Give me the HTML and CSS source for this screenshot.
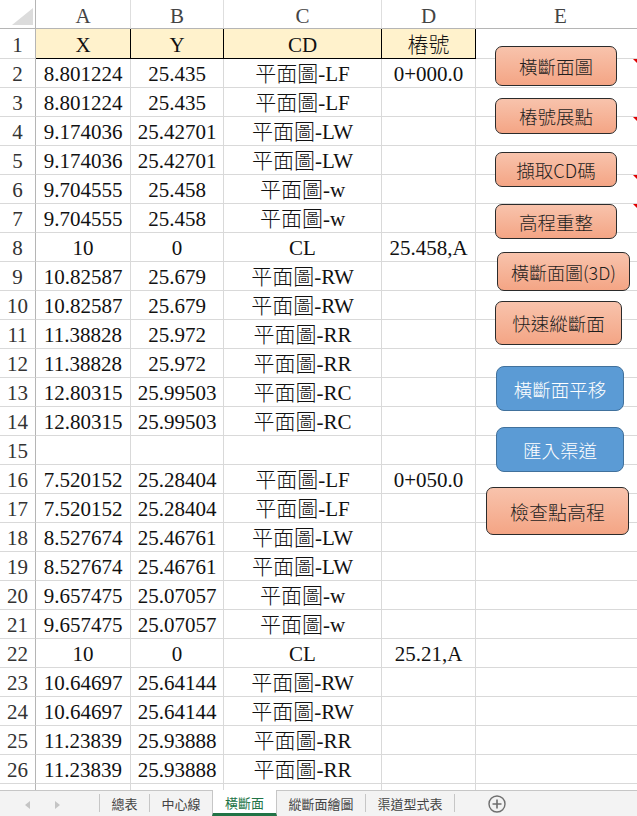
FILE: index.html
```html
<!DOCTYPE html>
<html lang="zh-Hant">
<head>
<meta charset="utf-8">
<title>橫斷面</title>
<link rel="stylesheet" href="styles.css">
</head>
<body>
<div class="app">
  <div class="sheet">
    <div class="row head">
      <div class="cell corner"><span class="tri"></span></div>
      <div class="cell">A</div>
      <div class="cell">B</div>
      <div class="cell">C</div>
      <div class="cell">D</div>
      <div class="cell">E</div>
    </div>
    <div class="row first">
      <div class="cell num">1</div>
      <div class="cell hd">X</div>
      <div class="cell hd">Y</div>
      <div class="cell hd">CD</div>
      <div class="cell hd">樁號</div>
      <div class="cell"></div>
    </div>
    <div class="row"><div class="cell num">2</div><div class="cell">8.801224</div><div class="cell">25.435</div><div class="cell">平面圖-LF</div><div class="cell">0+000.0</div><div class="cell"></div></div>
    <div class="row"><div class="cell num">3</div><div class="cell">8.801224</div><div class="cell">25.435</div><div class="cell">平面圖-LF</div><div class="cell"></div><div class="cell"></div></div>
    <div class="row"><div class="cell num">4</div><div class="cell">9.174036</div><div class="cell">25.42701</div><div class="cell">平面圖-LW</div><div class="cell"></div><div class="cell"></div></div>
    <div class="row"><div class="cell num">5</div><div class="cell">9.174036</div><div class="cell">25.42701</div><div class="cell">平面圖-LW</div><div class="cell"></div><div class="cell"></div></div>
    <div class="row"><div class="cell num">6</div><div class="cell">9.704555</div><div class="cell">25.458</div><div class="cell">平面圖-w</div><div class="cell"></div><div class="cell"></div></div>
    <div class="row"><div class="cell num">7</div><div class="cell">9.704555</div><div class="cell">25.458</div><div class="cell">平面圖-w</div><div class="cell"></div><div class="cell"></div></div>
    <div class="row"><div class="cell num">8</div><div class="cell">10</div><div class="cell">0</div><div class="cell">CL</div><div class="cell">25.458,A</div><div class="cell"></div></div>
    <div class="row"><div class="cell num">9</div><div class="cell">10.82587</div><div class="cell">25.679</div><div class="cell">平面圖-RW</div><div class="cell"></div><div class="cell"></div></div>
    <div class="row"><div class="cell num">10</div><div class="cell">10.82587</div><div class="cell">25.679</div><div class="cell">平面圖-RW</div><div class="cell"></div><div class="cell"></div></div>
    <div class="row"><div class="cell num">11</div><div class="cell">11.38828</div><div class="cell">25.972</div><div class="cell">平面圖-RR</div><div class="cell"></div><div class="cell"></div></div>
    <div class="row"><div class="cell num">12</div><div class="cell">11.38828</div><div class="cell">25.972</div><div class="cell">平面圖-RR</div><div class="cell"></div><div class="cell"></div></div>
    <div class="row"><div class="cell num">13</div><div class="cell">12.80315</div><div class="cell">25.99503</div><div class="cell">平面圖-RC</div><div class="cell"></div><div class="cell"></div></div>
    <div class="row"><div class="cell num">14</div><div class="cell">12.80315</div><div class="cell">25.99503</div><div class="cell">平面圖-RC</div><div class="cell"></div><div class="cell"></div></div>
    <div class="row"><div class="cell num">15</div><div class="cell"></div><div class="cell"></div><div class="cell"></div><div class="cell"></div><div class="cell"></div></div>
    <div class="row"><div class="cell num">16</div><div class="cell">7.520152</div><div class="cell">25.28404</div><div class="cell">平面圖-LF</div><div class="cell">0+050.0</div><div class="cell"></div></div>
    <div class="row"><div class="cell num">17</div><div class="cell">7.520152</div><div class="cell">25.28404</div><div class="cell">平面圖-LF</div><div class="cell"></div><div class="cell"></div></div>
    <div class="row"><div class="cell num">18</div><div class="cell">8.527674</div><div class="cell">25.46761</div><div class="cell">平面圖-LW</div><div class="cell"></div><div class="cell"></div></div>
    <div class="row"><div class="cell num">19</div><div class="cell">8.527674</div><div class="cell">25.46761</div><div class="cell">平面圖-LW</div><div class="cell"></div><div class="cell"></div></div>
    <div class="row"><div class="cell num">20</div><div class="cell">9.657475</div><div class="cell">25.07057</div><div class="cell">平面圖-w</div><div class="cell"></div><div class="cell"></div></div>
    <div class="row"><div class="cell num">21</div><div class="cell">9.657475</div><div class="cell">25.07057</div><div class="cell">平面圖-w</div><div class="cell"></div><div class="cell"></div></div>
    <div class="row"><div class="cell num">22</div><div class="cell">10</div><div class="cell">0</div><div class="cell">CL</div><div class="cell">25.21,A</div><div class="cell"></div></div>
    <div class="row"><div class="cell num">23</div><div class="cell">10.64697</div><div class="cell">25.64144</div><div class="cell">平面圖-RW</div><div class="cell"></div><div class="cell"></div></div>
    <div class="row"><div class="cell num">24</div><div class="cell">10.64697</div><div class="cell">25.64144</div><div class="cell">平面圖-RW</div><div class="cell"></div><div class="cell"></div></div>
    <div class="row"><div class="cell num">25</div><div class="cell">11.23839</div><div class="cell">25.93888</div><div class="cell">平面圖-RR</div><div class="cell"></div><div class="cell"></div></div>
    <div class="row"><div class="cell num">26</div><div class="cell">11.23839</div><div class="cell">25.93888</div><div class="cell">平面圖-RR</div><div class="cell"></div><div class="cell"></div></div>
    <div class="row"><div class="cell num"></div><div class="cell"></div><div class="cell"></div><div class="cell"></div><div class="cell"></div><div class="cell"></div></div>

    <span class="mark m1"></span>
    <span class="mark m2"></span>
    <span class="mark m3"></span>
    <span class="mark m4"></span>

    <div class="btn orange b1">橫斷面圖</div>
    <div class="btn orange b2">樁號展點</div>
    <div class="btn orange b3">擷取CD碼</div>
    <div class="btn orange b4">高程重整</div>
    <div class="btn orange b5">橫斷面圖(3D)</div>
    <div class="btn orange b6">快速縱斷面</div>
    <div class="btn blue b7">橫斷面平移</div>
    <div class="btn blue b8">匯入渠道</div>
    <div class="btn orange b9">檢查點高程</div>
  </div>

  <div class="tabbar">
    <div class="nav">
      <span class="arrow left"></span>
      <span class="arrow right"></span>
    </div>
    <div class="tab">總表</div>
    <div class="tab">中心線</div>
    <div class="tab active">橫斷面</div>
    <div class="tab">縱斷面繪圖</div>
    <div class="tab">渠道型式表</div>
    <div class="add">
      <svg width="20" height="20" viewBox="0 0 20 20">
        <circle cx="10" cy="10" r="8" fill="none" stroke="#6f6f6f" stroke-width="1.4"/>
        <path d="M10 5.5V14.5M5.5 10H14.5" stroke="#6f6f6f" stroke-width="1.6"/>
      </svg>
    </div>
  </div>
</div>
</body>
</html>
```
FILE: styles.css
```css
html, body {
  margin: 0;
  padding: 0;
  background: #ffffff;
  overflow: hidden;
}

.app {
  width: 637px;
  height: 816px;
  display: flex;
  flex-direction: column;
  overflow: hidden;
}

.sheet {
  position: relative;
  height: 790px;
  overflow: hidden;
  font-family: "Liberation Serif", "Noto Sans CJK TC", serif;
  font-size: 21px;
  font-weight: 300;
  color: #111;
}

.row {
  display: grid;
  grid-template-columns: 36px 95px 93px 158px 94px 170px;
  height: 29px;
}

.cell {
  box-sizing: border-box;
  border-right: 1px solid #d9d9d9;
  border-bottom: 1px solid #d9d9d9;
  display: flex;
  align-items: flex-end;
  justify-content: center;
  padding-bottom: 1px;
  line-height: 24px;
  white-space: nowrap;
  overflow: hidden;
}

.cell.num {
  border-right: 1px solid #b5b5b5;
  color: #333;
}

.row.head .cell {
  color: #444;
  border-bottom: 1px solid #b5b5b5;
  border-right: 1px solid #dedede;
  font-size: 21px;
  padding-bottom: 0;
}

.row.head .cell.corner {
  border-right: 1px solid #b5b5b5;
  position: relative;
}

.tri {
  position: absolute;
  right: 2px;
  bottom: 3px;
  width: 0;
  height: 0;
  border-left: 21px solid transparent;
  border-bottom: 17px solid #dcdcdc;
}

.row.first {
  height: 30px;
}

.cell.hd {
  background: #fff2cc;
  border-right: 1px solid #000;
  border-bottom: 1px solid #000;
}

.mark {
  position: absolute;
  right: 0;
  width: 0;
  height: 0;
  border-top: 4px solid #e00000;
  border-left: 4px solid transparent;
}
.m1 { top: 59px; }
.m2 { top: 117px; }
.m3 { top: 175px; }
.m4 { top: 204px; }

.btn {
  position: absolute;
  box-sizing: border-box;
  display: flex;
  align-items: center;
  justify-content: center;
  font-family: "Noto Sans CJK TC", "Noto Sans", sans-serif;
  font-size: 18.5px;
  font-weight: 300;
  border-radius: 7px;
  white-space: nowrap;
}

.btn.orange {
  background: linear-gradient(#f8c3ac, #f4a585);
  border: 1px solid #2b2b2b;
  color: #1e1e1e;
}

.btn.blue {
  background: #5b9bd5;
  border: 1.5px solid #41719c;
  color: #ffffff;
  border-radius: 8px;
}

.b1 { left: 495px; top: 46px; width: 122px; height: 40px; }
.b2 { left: 495px; top: 98px; width: 122px; height: 36px; }
.b3 { left: 495px; top: 152px; width: 122px; height: 35px; }
.b4 { left: 495px; top: 204px; width: 122px; height: 35px; }
.b5 { left: 497px; top: 252px; width: 133px; height: 39px; font-size: 18px; }
.b6 { left: 495px; top: 301px; width: 127px; height: 44px; }
.b7 { left: 496px; top: 366px; width: 128px; height: 45px; }
.b8 { left: 496px; top: 427px; width: 128px; height: 45px; }
.b9 { left: 486px; top: 487px; width: 143px; height: 48px; font-size: 19px; }

.tabbar {
  height: 26px;
  box-sizing: border-box;
  border-top: 1px solid #c6c6c6;
  background: #f3f3f3;
  display: flex;
  align-items: stretch;
  font-family: "Noto Sans CJK TC", "Noto Sans", sans-serif;
  font-size: 13px;
  color: #444;
}

.nav {
  width: 100px;
  box-sizing: border-box;
  border-right: 1px solid #c6c6c6;
  margin: 3px 0 4px;
  position: relative;
}

.arrow {
  position: absolute;
  top: 7px;
  width: 0;
  height: 0;
  border-top: 4px solid transparent;
  border-bottom: 4px solid transparent;
}
.arrow.left {
  left: 25px;
  border-right: 5px solid #c4c4c4;
}
.arrow.right {
  left: 55px;
  border-left: 5px solid #c4c4c4;
}

.tab {
  display: flex;
  align-items: center;
  padding: 0 11.5px;
  box-sizing: border-box;
  border-right: 1px solid #c6c6c6;
  margin: 3px 0 4px;
  line-height: 1;
}

.tab.active {
  margin: -1px 0 0;
  background: #ffffff;
  color: #217346;
  border-left: 1px solid #c6c6c6;
  border-right: 1px solid #c6c6c6;
  border-bottom: 3px solid #217346;
  padding: 1px 12px 0;
  margin-left: -1px;
}

.add {
  display: flex;
  align-items: center;
  margin-left: 32px;
}
```
